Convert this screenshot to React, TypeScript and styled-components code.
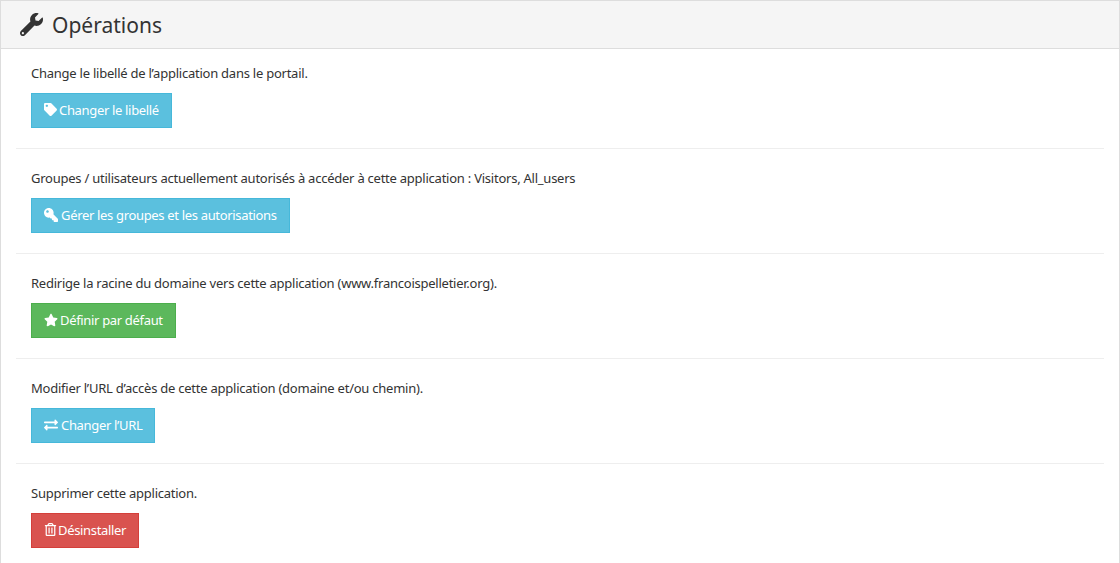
import React from 'react';
import styled, { createGlobalStyle } from 'styled-components';
import { FaWrench, FaTag, FaKey, FaStar, FaExchangeAlt, FaRegTrashAlt } from 'react-icons/fa';

const GlobalStyle = createGlobalStyle`
  html, body {
    margin: 0;
    height: 100%;
    overflow: hidden;
    background: #fff;
  }
  body {
    font-family: "Noto Sans", Lato, sans-serif;
    font-size: 13px;
    line-height: 20px;
    color: #333;
  }
`;

const Panel = styled.section`
  border: 1px solid #ddd;
  border-bottom: 0;
  background: #fff;
`;

const PanelHeading = styled.header`
  display: flex;
  align-items: center;
  gap: 9px;
  height: 47px;
  padding: 0 19px;
  background: #f5f5f5;
  border-bottom: 1px solid #ddd;
`;

const PanelTitle = styled.h2`
  margin: 0;
  font-size: 21px;
  font-weight: 400;
  color: #333;
`;

const PanelBody = styled.div`
  padding: 14px 15px 15px;
`;

const Operation = styled.div`
  padding: 0 15px;

  & + & {
    margin-top: 20px;
    padding-top: 19px;
    border-top: 1px solid #eee;
  }
`;

const Description = styled.p`
  margin: 0 0 10px;
  letter-spacing: -0.24px;
`;

const colours = {
  info: { bg: '#5bc0de', border: '#46b8da' },
  success: { bg: '#5cb85c', border: '#4cae4c' },
  danger: { bg: '#d9534f', border: '#d43f3a' },
};

const ActionButton = styled.button<{ $kind: keyof typeof colours; $gap: number }>`
  display: inline-flex;
  align-items: center;
  gap: ${p => p.$gap}px;
  height: 35px;
  padding: 0 12px 2px;
  border: 1px solid ${p => colours[p.$kind].border};
  border-radius: 0;
  background: ${p => colours[p.$kind].bg};
  color: #fff;
  font: inherit;
  letter-spacing: -0.33px;
`;

const FlippedKey = styled(FaKey)`
  transform: scaleX(-1);
`;

const operations = [
  { text: 'Change le libellé de l’application dans le portail.', label: 'Changer le libellé', icon: FaTag, kind: 'info', gap: 2, size: 13 },
  { text: 'Groupes / utilisateurs actuellement autorisés à accéder à cette application : Visitors, All_users', label: 'Gérer les groupes et les autorisations', icon: FlippedKey, kind: 'info', gap: 3, size: 14 },
  { text: 'Redirige la racine du domaine vers cette application (www.francoispelletier.org).', label: 'Définir par défaut', icon: FaStar, kind: 'success', gap: 2, size: 14 },
  { text: 'Modifier l’URL d’accès de cette application (domaine et/ou chemin).', label: 'Changer l’URL', icon: FaExchangeAlt, kind: 'info', gap: 3, size: 14 },
  { text: 'Supprimer cette application.', label: 'Désinstaller', icon: FaRegTrashAlt, kind: 'danger', gap: 1, size: 13 },
] as const;

export default function App() {
  return (
    <>
      <GlobalStyle />
      <Panel>
        <PanelHeading>
          <FaWrench size={23} color="#333" />
          <PanelTitle>Opérations</PanelTitle>
        </PanelHeading>
        <PanelBody>
          {operations.map(op => {
            const Icon = op.icon;
            return (
              <Operation key={op.label}>
                <Description>{op.text}</Description>
                <ActionButton $kind={op.kind} $gap={op.gap}>
                  <Icon size={op.size} />
                  {op.label}
                </ActionButton>
              </Operation>
            );
          })}
        </PanelBody>
      </Panel>
    </>
  );
}
